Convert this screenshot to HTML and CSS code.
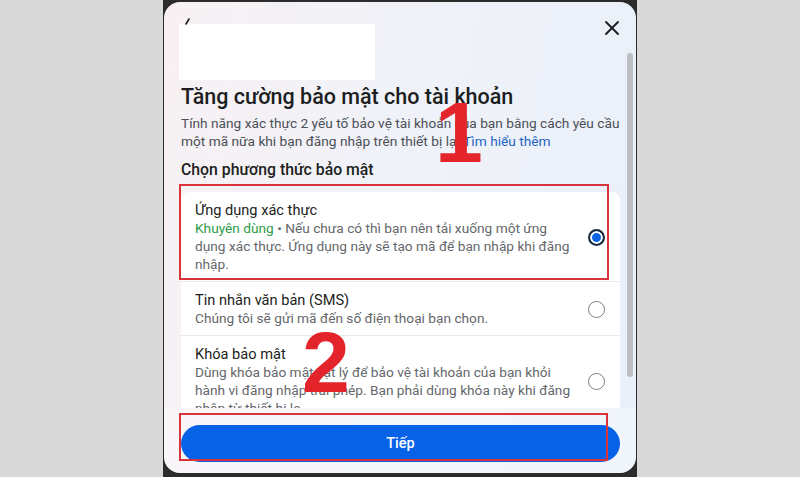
FILE: index.html
```html
<!DOCTYPE html>
<html lang="vi">
<head>
<meta charset="utf-8">
<title>Tăng cường bảo mật</title>
<link rel="stylesheet" href="styles.css">
</head>
<body>
<div class="stage">
  <div class="modal">
    <div class="header">
      <div class="redact"></div>
      <svg class="back-tip" width="8" height="8" viewBox="0 0 8 8"><path d="M6 1 L3 6" stroke="#1c1e21" stroke-width="1.6" stroke-linecap="round" fill="none"/></svg>
      <button class="close" aria-label="Đóng">
        <svg width="16" height="16" viewBox="0 0 16 16"><path d="M2 2 L14 14 M14 2 L2 14" stroke="#1c1e21" stroke-width="1.9" stroke-linecap="round" fill="none"/></svg>
      </button>
    </div>
    <div class="body">
      <h1 class="title">Tăng cường bảo mật cho tài khoản</h1>
      <p class="intro">Tính năng xác thực 2 yếu tố bảo vệ tài khoản của bạn bằng cách yêu cầu một mã nữa khi bạn đăng nhập trên thiết bị lạ. <a href="#" class="link">Tìm hiểu thêm</a></p>
      <h2 class="section">Chọn phương thức bảo mật</h2>
      <div class="card">
        <div class="option">
          <div class="opt-text">
            <div class="opt-title">Ứng dụng xác thực</div>
            <div class="opt-desc"><span class="rec">Khuyên dùng</span> • Nếu chưa có thì bạn nên tải xuống một ứng dụng xác thực. Ứng dụng này sẽ tạo mã để bạn nhập khi đăng nhập.</div>
          </div>
          <span class="radio checked"></span>
        </div>
        <div class="option">
          <div class="opt-text">
            <div class="opt-title">Tin nhắn văn bản (SMS)</div>
            <div class="opt-desc">Chúng tôi sẽ gửi mã đến số điện thoại bạn chọn.</div>
          </div>
          <span class="radio"></span>
        </div>
        <div class="option">
          <div class="opt-text">
            <div class="opt-title">Khóa bảo mật</div>
            <div class="opt-desc">Dùng khóa bảo mật vật lý để bảo vệ tài khoản của bạn khỏi hành vi đăng nhập trái phép. Bạn phải dùng khóa này khi đăng nhập từ thiết bị lạ.</div>
          </div>
          <span class="radio"></span>
        </div>
      </div>
    </div>
    <div class="footer">
      <button class="next">Tiếp</button>
    </div>
    <div class="scrollbar"></div>
  </div>
  <div class="mark mark-1"></div>
  <div class="mark mark-2"></div>
  <div class="num num-1">1</div>
  <div class="num num-2">2</div>
</div>
</body>
</html>
```

FILE: styles.css
```css
* { box-sizing: border-box; }
html, body { margin: 0; padding: 0; }
body {
  width: 800px;
  height: 477px;
  overflow: hidden;
  background: #d9d9d9;
  font-family: Roboto, "Liberation Sans", Arial, sans-serif;
  color: #1c1e21;
}
.stage {
  position: relative;
  margin-left: 163px;
  width: 474px;
  height: 477px;
  background: #2b2b2b;
  padding: 2px 1px 4px 1px;
}
.modal {
  position: relative;
  height: 471px;
  border-radius: 16px;
  overflow: hidden;
  background: linear-gradient(100deg, #f8f1f4 0%, #f1f2f8 40%, #e9f0fa 100%);
  display: flex;
  flex-direction: column;
}
.header {
  position: relative;
  display: flex;
  justify-content: space-between;
  align-items: flex-start;
  padding: 22px 16px 0 15px;
  height: 80px;
  flex: none;
}
.redact {
  width: 196px;
  height: 56px;
  background: #ffffff;
}
.back-tip {
  position: absolute;
  left: 19px;
  top: 16px;
}
.close {
  border: 0;
  background: none;
  padding: 0;
  margin-top: -4px;
  width: 16px;
  height: 16px;
  display: block;
}
.close svg { display: block; }
.body {
  flex: 1;
  overflow: hidden;
  padding: 0 16px 0 17px;
}
.title {
  margin: 2px 0 0;
  font-size: 21.5px;
  line-height: 26px;
  font-weight: 500;
  color: #1c1e21;
}
.intro {
  margin: 4px 0 0;
  font-size: 13.7px;
  line-height: 18px;
  color: #4b4f56;
}
.link {
  color: #1f64c4;
  text-decoration: none;
}
.section {
  margin: 10px 0 0;
  font-size: 15.8px;
  line-height: 20px;
  font-weight: 500;
  color: #1c1e21;
}
.card {
  margin-top: 12px;
  background: #ffffff;
  border-radius: 8px;
}
.option {
  display: flex;
  align-items: center;
  justify-content: space-between;
  padding: 9px 15px 8px 14px;
  border-bottom: 1px solid #e6e8eb;
}
.opt-text { width: 384px; }
.opt-title {
  font-size: 14.6px;
  line-height: 18px;
  color: #1c1e21;
}
.opt-desc {
  font-size: 13.7px;
  line-height: 18px;
  color: #65676b;
}
.rec { color: #2e9b47; }
.radio {
  flex: none;
  width: 17px;
  height: 17px;
  border-radius: 50%;
  border: 1.5px solid #7a7d82;
  background: #fff;
}
.radio.checked {
  border: 2px solid #1d2a3a;
  background: #0a63e6;
  box-shadow: inset 0 0 0 2px #fff;
}
.footer {
  flex: none;
  height: 65px;
  padding: 17px 16px 11px 17px;
  background: rgba(255, 255, 255, 0.35);
}
.next {
  width: 100%;
  height: 37px;
  border: 0;
  border-radius: 19px;
  background: #0762e8;
  color: #ffffff;
  font-family: Roboto, "Liberation Sans", Arial, sans-serif;
  font-size: 14.5px;
  font-weight: 500;
}
.scrollbar {
  position: absolute;
  left: 463px;
  top: 51px;
  width: 6px;
  height: 324px;
  border-radius: 3px;
  background: #bdbfc3;
}
.mark {
  position: absolute;
  border: 2px solid #d9333b;
}
.mark-1 { left: 16px; top: 184px; width: 430px; height: 96px; }
.mark-2 { left: 16px; top: 413px; width: 429px; height: 48px; }
.num {
  position: absolute;
  font-family: "Liberation Sans", Arial, sans-serif;
  font-weight: 700;
  font-size: 86px;
  line-height: 1;
  color: #e3242b;
}
.num-1 { left: 272px; top: 89px; }
.num-2 { left: 139px; top: 319px; }
```
